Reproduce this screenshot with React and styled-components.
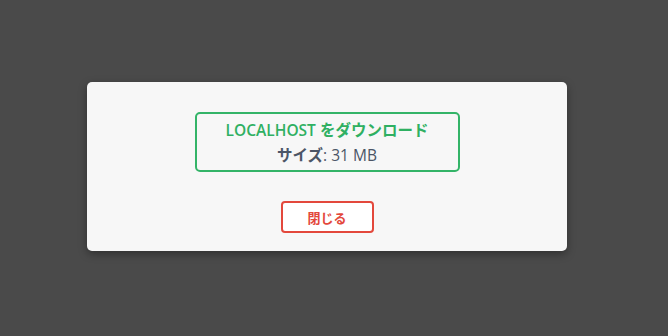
import React from 'react';
import styled, { createGlobalStyle } from 'styled-components';

const GlobalStyle = createGlobalStyle`
  html, body {
    margin: 0;
    padding: 0;
    background: #4a4a4a;
  }
  body {
    font-family: "Open Sans", "Noto Sans CJK JP", sans-serif;
  }
`;

const Page = styled.div`
  width: 668px;
  height: 336px;
  box-sizing: border-box;
  padding: 82px 0 0 87px;
  background: #4a4a4a;
`;

const Card = styled.div`
  width: 480px;
  height: 169px;
  box-sizing: border-box;
  background: #f7f7f7;
  border-radius: 5px;
  box-shadow: 0 3px 8px rgba(0, 0, 0, 0.35);
  padding: 30px 0 0;
  display: flex;
  flex-direction: column;
  align-items: center;
`;

const InfoBox = styled.div`
  width: 265px;
  height: 60px;
  box-sizing: border-box;
  border: 2px solid #34b468;
  border-radius: 5px;
  padding: 4px 0 0;
  display: flex;
  flex-direction: column;
  align-items: center;
  font-size: 15.5px;
  line-height: 25px;
`;

const Title = styled.div`
  color: #2fb062;
  font-weight: 600;
  white-space: nowrap;
`;

const Size = styled.div`
  color: #4b5566;
  font-weight: 400;
  white-space: nowrap;

  b {
    font-weight: 700;
  }
`;

const CloseButton = styled.button`
  margin-top: 29px;
  width: 93px;
  height: 32px;
  box-sizing: border-box;
  border: 2px solid #e3483c;
  border-radius: 4px;
  background: #ffffff;
  color: #e3483c;
  font-family: "Open Sans", "Noto Sans CJK JP", sans-serif;
  font-size: 13px;
  font-weight: 600;
  cursor: pointer;
  padding: 0;
`;

export default function App() {
  return (
    <>
      <GlobalStyle />
      <Page>
        <Card>
          <InfoBox>
            <Title>LOCALHOST をダウンロード</Title>
            <Size><b>サイズ</b>: 31 MB</Size>
          </InfoBox>
          <CloseButton>閉じる</CloseButton>
        </Card>
      </Page>
    </>
  );
}
